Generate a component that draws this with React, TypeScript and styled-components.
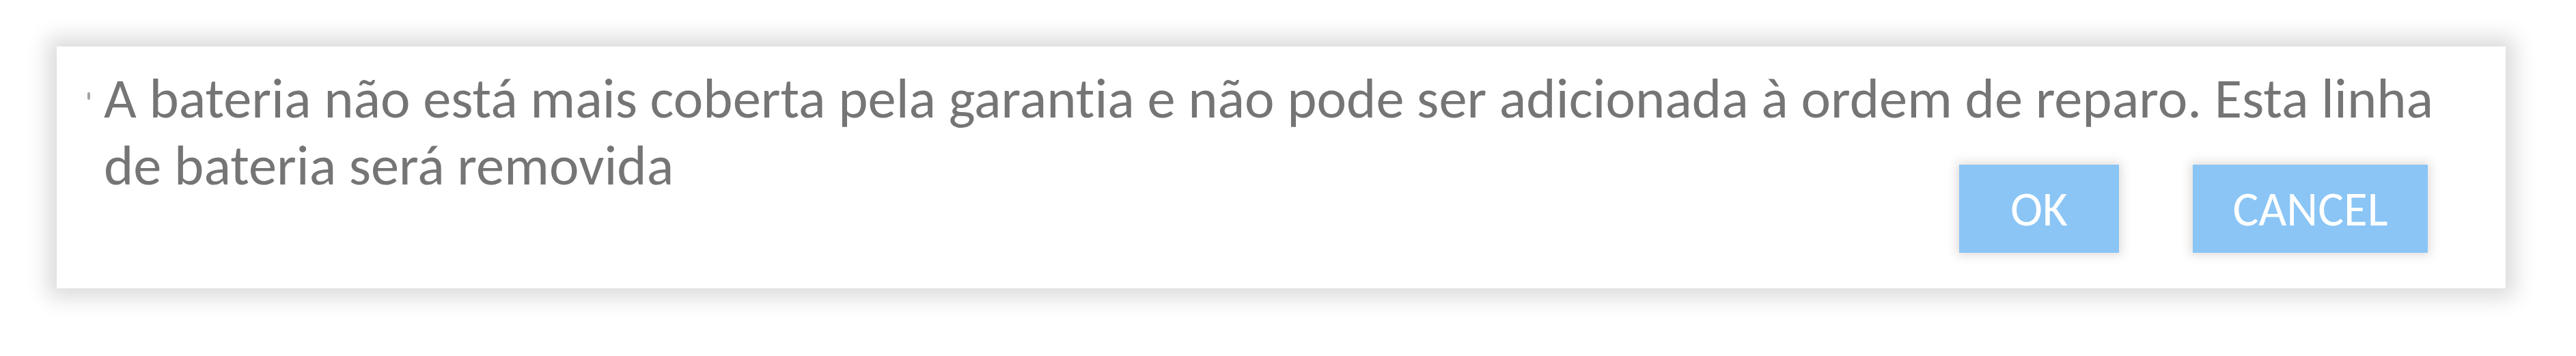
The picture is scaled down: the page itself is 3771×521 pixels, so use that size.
import React from "react";
import styled, { createGlobalStyle } from "styled-components";

const GlobalStyle = createGlobalStyle`
  html, body {
    margin: 0;
    padding: 0;
    background: #ffffff;
  }
  body {
    font-family: Carlito, Calibri, "Liberation Sans", sans-serif;
  }
`;

const Page = styled.div`
  width: 3771px;
  height: 521px;
  box-sizing: border-box;
  padding: 68px 0 0 83px;
  background: #ffffff;
`;

const Dialog = styled.div`
  width: 3585px;
  height: 354px;
  box-sizing: border-box;
  padding: 27px 60px 52px 45px;
  background: #ffffff;
  box-shadow: 0 0 30px 13px rgba(0, 0, 0, 0.15);
  display: grid;
  grid-template-columns: 1fr;
  grid-template-rows: 1fr;
  filter: blur(0.7px);
`;

const MessageRow = styled.div`
  grid-area: 1 / 1;
  display: flex;
  align-items: flex-start;
  gap: 20px;
`;

const Marker = styled.span`
  flex: none;
  width: 4px;
  height: 11px;
  margin-top: 40px;
  border-radius: 2px;
  background: #a3a3a3;
`;

const Message = styled.p`
  margin: 0;
  flex: 1;
  font-family: Carlito, Calibri, "Liberation Sans", sans-serif;
  font-size: 82.5px;
  line-height: 98px;
  font-variant-ligatures: none;
  color: #757575;
`;

const Actions = styled.div`
  grid-area: 1 / 1;
  align-self: end;
  justify-self: end;
  margin-right: 54px;
  display: flex;
  gap: 108px;
`;

const ActionButton = styled.button<{ $width: number }>`
  width: ${(p) => p.$width}px;
  height: 129px;
  padding: 0;
  border: none;
  border-radius: 0;
  background: #8ac5f5;
  color: #ffffff;
  font-family: Carlito, Calibri, "Liberation Sans", sans-serif;
  font-size: 71px;
  line-height: 1;
  display: flex;
  align-items: center;
  justify-content: center;
  box-shadow: 0 0 14px 3px rgba(90, 70, 60, 0.2);
  cursor: pointer;
`;

export default function App() {
  return (
    <Page>
      <GlobalStyle />
      <Dialog role="dialog">
        <MessageRow>
          <Marker />
          <Message>
            A bateria não está mais coberta pela garantia e não pode ser adicionada à ordem de
            reparo. Esta linha de bateria será removida
          </Message>
        </MessageRow>
        <Actions>
          <ActionButton $width={234}>OK</ActionButton>
          <ActionButton $width={344}>CANCEL</ActionButton>
        </Actions>
      </Dialog>
    </Page>
  );
}
